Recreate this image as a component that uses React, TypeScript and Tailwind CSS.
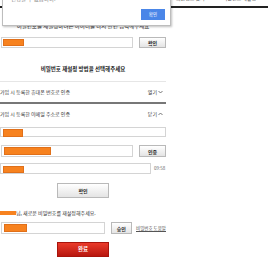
import React from "react";

const btn =
  "flex items-center justify-center border border-[#b9b9b9] bg-gradient-to-b from-white to-[#e4e4e4] text-[#222] font-bold text-[5px] leading-none";

function Orange({ w, h }: { w: string; h: string }) {
  return <div className={`${w} ${h} bg-[#f7821f] border border-[#e0701a]`} />;
}

export default function App() {
  return (
    <div
      className="relative w-[276px] h-[260px] overflow-hidden bg-white text-[#333]"
      style={{ fontFamily: '"Noto Sans CJK KR", "Noto Sans", sans-serif' }}
    >
      {/* background header */}
      <div className="w-[268px] h-[8px] border-b-2 border-[#222] overflow-hidden">
        <div className="flex -mt-[5px] text-[5px] leading-[6px] text-[#444]">
          <span className="ml-[176px]">회원정보 찾기</span>
          <span className="ml-[18px]">비밀번호 재설정</span>
        </div>
      </div>

      <div className="w-[166px] flex flex-col">
        <div className="mt-[14px] h-[8px] text-center text-[5.5px] leading-[8px] text-[#222]">
          비밀번호를 재설정하려는 아이디를 다시 한번 입력해주세요
        </div>

        <div className="mt-[7px] flex gap-[6px] ml-px">
          <div className="w-[132px] h-[11px] border border-[#d4d4d4] bg-white pl-[1px] pt-[1px]">
            <Orange w="w-[21px]" h="h-[7px]" />
          </div>
          <div className={`${btn} w-[27px] h-[11px]`}>확인</div>
        </div>

        <div className="mt-[18px] h-[7px] text-center text-[5.5px] leading-[7px] font-bold text-[#222]">
          비밀번호 재설정 방법을 선택해주세요
        </div>

        <div className="mt-[8px] h-px bg-[#e6e6e6]" />
        <div className="h-[20px] flex items-center justify-between text-[5px] text-[#333] pr-[3px]">
          <span>가입 시 등록한 휴대폰 번호로 인증</span>
          <span className="flex items-center gap-[1px]">
            열기
            <svg width="5" height="4" viewBox="0 0 5 4">
              <path d="M0.5 1 L2.5 3 L4.5 1" fill="none" stroke="#555" strokeWidth="0.8" />
            </svg>
          </span>
        </div>
        <div className="h-[2px] bg-[#777]" />
        <div className="h-[20px] flex items-center justify-between text-[5px] text-[#333] pr-[3px]">
          <span>가입 시 등록한 이메일 주소로 인증</span>
          <span className="flex items-center gap-[1px]">
            닫기
            <svg width="5" height="4" viewBox="0 0 5 4">
              <path d="M0.5 3 L2.5 1 L4.5 3" fill="none" stroke="#555" strokeWidth="0.8" />
            </svg>
          </span>
        </div>

        <div className="mt-[3px] w-[166px] h-[10px] border border-[#d4d4d4] pl-[2px] pt-px">
          <Orange w="w-[20px]" h="h-[8px]" />
        </div>

        <div className="mt-[8px] flex gap-[6px] ml-px">
          <div className="w-[132px] h-[12px] border border-[#d4d4d4] pl-[2px] pt-[1px]">
            <Orange w="w-[47px]" h="h-[8px]" />
          </div>
          <div className={`${btn} w-[27px] h-[12px]`}>인증</div>
        </div>

        <div className="mt-[6px] flex items-center gap-[3px]">
          <div className="w-[151px] h-[11px] border border-[#d4d4d4] pl-[2px] pt-[2px]">
            <Orange w="w-[21px]" h="h-[7px]" />
          </div>
          <span className="text-[4.5px] text-[#666]">09:58</span>
        </div>

        <div className="mt-[9px] ml-[57px] w-[52px] h-[15px] flex">
          <div className={`${btn} w-full h-full text-[5.5px]`}>확인</div>
        </div>

        <div className="mt-[11px] h-[8px] flex items-center text-[5px] text-[#333]">
          <span className="w-[16px] h-[4px] bg-[#f7821f]" />
          <span>님, 새로운 비밀번호를 재설정해주세요.</span>
        </div>

        <div className="mt-[5px] flex items-center ml-px">
          <div className="w-[132px] h-[12px] border border-[#d4d4d4] pl-[2px] pt-[1px]">
            <Orange w="w-[23px]" h="h-[8px]" />
          </div>
          <div className={`${btn} ml-[6px] w-[27px] h-[12px]`}>승인</div>
          <span className="ml-[4px] text-[4.5px] text-[#555] underline whitespace-nowrap">
            비밀번호 도움말
          </span>
        </div>

        <div className="mt-[8px] ml-[57px] w-[52px] h-[15px] flex items-center justify-center bg-gradient-to-b from-[#ea3a2a] to-[#b8160e] border border-[#a8140c] text-white font-bold text-[5.5px]">
          완료
        </div>
      </div>

      {/* alert dialog overlay */}
      <div className="absolute left-[2px] top-[-20px] w-[169px] h-[46px] bg-white border border-[#bdbdbd] shadow-[1px_1px_2px_rgba(0,0,0,0.25)]">
        <div className="absolute left-[8px] top-[14px] text-[5.5px] leading-[8px] text-[#888]">
          변경할 수 없습니다.
        </div>
        <div className="absolute left-[138px] top-[28px] w-[24px] h-[11px] bg-[#4a86e8] flex items-center justify-center text-white text-[4.5px]">
          확인
        </div>
      </div>
    </div>
  );
}
